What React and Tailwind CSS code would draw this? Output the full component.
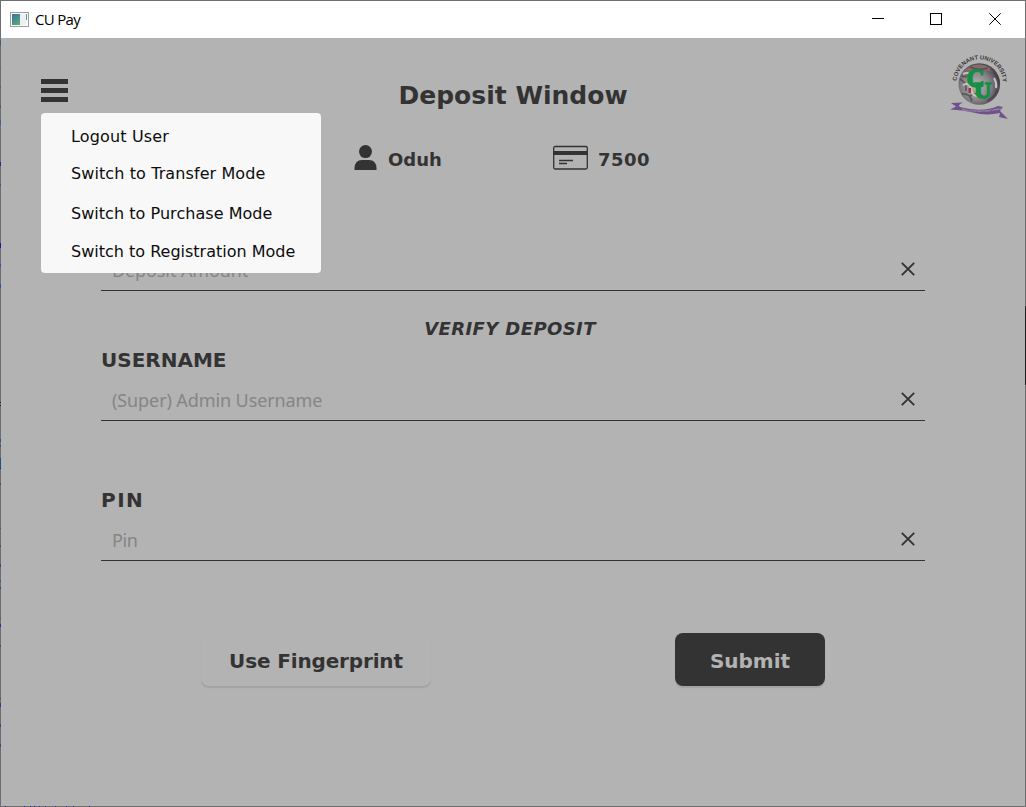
import React from "react";

const verdana = "font-['DejaVu_Sans',sans-serif]";

function TitleBar() {
  return (
    <div className="flex h-[37px] items-center bg-white text-black">
      <svg width="20" height="17" viewBox="0 0 20 17" className="mb-px ml-[9px] shrink-0">
        <defs>
          <linearGradient id="pane" x1="0" y1="0" x2=".6" y2="1">
            <stop offset="0" stopColor="#3f6f9c" />
            <stop offset="1" stopColor="#4fa878" />
          </linearGradient>
        </defs>
        <rect x=".5" y="1.5" width="18" height="14" fill="#fafafa" stroke="#9a9ea3" />
        <rect x="2" y="3" width="8" height="11" fill="url(#pane)" />
        <rect x="10" y="3" width="6" height="11" fill="#eeeff1" />
        <rect x="16" y="3" width="1" height="6" fill="#4fa07d" />
      </svg>
      <span className="mb-[2px] ml-[5px] flex-1 font-['Open_Sans','Noto_Sans',sans-serif] text-[15px] leading-[20px] tracking-[-0.7px]">CU Pay</span>
      <svg width="136" height="16" viewBox="0 0 136 16" className="mb-[2px] mr-[20px] shrink-0" fill="none" stroke="#000" strokeWidth="1">
        <path d="M3 7.5h12" />
        <rect x="61.5" y="2.5" width="11" height="11" />
        <path d="M120.3 2.3 131.7 13.7M131.7 2.3 120.3 13.7" />
      </svg>
    </div>
  );
}

function ClearIcon() {
  return (
    <svg width="16" height="16" viewBox="0 0 16 16" className="mb-[2px] mr-[9px] shrink-0" stroke="#333" strokeWidth="1.9" fill="none">
      <path d="M1.8 1.8 14.2 14.2M14.2 1.8 1.8 14.2" />
    </svg>
  );
}

function Field({ placeholder, spacing }) {
  return (
    <div className="flex h-[42px] items-center justify-between border-b border-[#333] pl-[11px]">
      <span className={"font-['Noto_Sans','Open_Sans',sans-serif] text-[18px] leading-[24px] text-[#858585] " + spacing}>{placeholder}</span>
      <ClearIcon />
    </div>
  );
}

function Logo() {
  return (
    <svg width="62" height="70" viewBox="0 0 62 70" className="shrink-0">
      <defs>
        <path id="arc" d="M8.6 29 A22.8 22.8 0 1 1 54.8 32" />
        <path id="scroll" d="M14 58 Q30 62 53 57.500" />
        <radialGradient id="globe" cx=".42" cy=".55" r=".58">
          <stop offset="0" stopColor="#b8b7b8" />
          <stop offset=".6" stopColor="#858286" />
          <stop offset="1" stopColor="#453e46" />
        </radialGradient>
      </defs>
      <circle cx="31.3" cy="32" r="20.800" fill="url(#globe)" />
      <path d="M15 20Q22 12 32 12.500q10 .5 15 8.500-8-4-14-1-9-4-18 0z" fill="#856b6c" />
      <path d="M22 15q8 4 18 1M12 27q7 4 6 12M14 42q8-1 10 7M42 17q8 5 9 13M39 49q8-4 10-11M22 44q8-6 15 3M14 24q5 2 8-2" stroke="#453e46" strokeWidth="1.8" fill="none" opacity=".65" />
      <path d="M15 33q7-3 8 4t6 7M15 22q6-3 8 2M46 26q3 5 2 10" stroke="#c4c3c4" strokeWidth="2" fill="none" />
      <path d="M20.500 36h2.500v5h-2.500z" fill="#983636" />
      <path d="M3 51 15 50.500Q9 53 12 55q22 6 38-1l5 1-3 4 8 8-9-2 1-4Q38 64 25 60.500L14 58.500 2 57.500l6-3z" fill="#6f5289" />
      <text fontFamily="Liberation Sans" fontSize="5.9" fontWeight="700" fill="#3a363a">
        <textPath href="#arc">COVENANT UNIVERSITY</textPath>
      </text>
      <text fontFamily="Liberation Sans" fontSize="2.7" fill="#c6bdcc">
        <textPath href="#scroll">Raising New Generation Leaders</textPath>
      </text>
      <g fontFamily="Liberation Serif" fontWeight="700" fill="#148f44" stroke="#148f44" strokeWidth="1.500">
        <text x="18.500" y="34.500" fontSize="25">C</text>
        <text x="26" y="45.500" fontSize="24">U</text>
      </g>
    </svg>
  );
}

const menuItems = [
  ["Logout User", "h-[37px] tracking-[0.15px]"],
  ["Switch to Transfer Mode", "h-[40px] tracking-[0.1px]"],
  ["Switch to Purchase Mode", "h-[38px] tracking-[0.04px]"],
  ["Switch to Registration Mode", "h-[24px] tracking-[0px]"],
];

function Menu() {
  return (
    <div className={"absolute left-0 top-[34px] z-10 h-[160px] w-[280px] rounded-[4px] bg-[#f8f8f8] pl-[30px] pt-[12px] text-[16px] leading-[24px] text-[#0d0d0d] " + verdana}>
      {menuItems.map(([label, cls]) => (
        <div key={label} className={"whitespace-nowrap " + cls}>{label}</div>
      ))}
    </div>
  );
}

const specks = [
  [40, 6, "#3a5f80"], [68, 1, "#2c6aa8"], [86, 2, "#2c6aa8"], [105, 3, "#3a5f80"], [120, 5, "#3a5fa0"],
  [162, 4, "#1d2c9a"], [184, 2, "#2c5aa8"], [243, 5, "#1a1a9a"], [264, 3, "#2c5aa8"], [284, 4, "#2f5590"],
  [402, 1, "#222222"], [405, 1, "#222222"], [439, 3, "#2f5580"], [445, 2, "#2f5580"], [458, 10, "#23508c"],
  [468, 1, "#1a1a9a"], [483, 2, "#2c5a90"], [528, 1, "#2c5a90"], [545, 2, "#2c5a90"], [564, 3, "#23508c"],
  [580, 2, "#3a5f80"], [587, 2, "#23508c"], [618, 1, "#2c5a90"], [624, 3, "#2c2c9a"], [645, 2, "#2c5a90"],
  [698, 1, "#2c5a90"], [703, 4, "#2c3c8a"], [724, 3, "#23508c"], [744, 3, "#23508c"],
];
const bottomSpecks = [5, 24, 30, 34, 39, 45, 55, 66, 73, 89];

export default function App() {
  return (
    <div className="relative h-[807px] w-[1026px] border border-[#6e6e6e] bg-[#b3b3b3] text-[#333]">
      <TitleBar />

      <div className="grid h-[84px] grid-cols-[1fr_auto_1fr] items-start">
        <div className="relative ml-10 mt-[41px] h-[23px] w-[27px]">
          <div className="flex flex-col gap-1">
            <div className="h-[5px] bg-[#333]" />
            <div className="h-[5px] bg-[#333]" />
            <div className="h-[5px] bg-[#333]" />
          </div>
          <Menu />
        </div>
        <h1 className={"mt-[43px] text-[25px] font-bold leading-[30px] " + verdana}>Deposit Window</h1>
        <div className="flex justify-end pr-[15px] pt-[14px]"><Logo /></div>
      </div>

      <div className={"flex h-[127px] items-start pl-[353px] pt-[23px] text-[18px] font-bold leading-[24px] " + verdana}>
        <div className="flex w-[199px]">
          <svg width="23" height="26" viewBox="0 0 23 26" fill="#333" className="shrink-0">
            <circle cx="11.500" cy="6.600" r="6.500" />
            <path d="M.5 25V23Q1 15 8 15h7q7 0 7.500 8v2z" />
          </svg>
          <span className="ml-[11px] mt-[3px]">Oduh</span>
        </div>
        <svg width="35" height="26" viewBox="0 0 35 26" className="shrink-0" fill="none" stroke="#333">
          <rect x=".7" y="1.500" width="33.600" height="22.500" rx="1.500" strokeWidth="1.300" />
          <path d="M0 8h35" strokeWidth="4" />
          <path d="M6 15.500h14M6 18.500h8" strokeWidth="1.400" />
        </svg>
        <span className="ml-[10px] mt-[3px] tracking-[0.5px]">7500</span>
      </div>

      <div className={"px-[100px] " + verdana}>
        <Field placeholder="Deposit Amount" spacing="tracking-[-0.1px]" />
        <h2 className="mr-[6px] mt-[26px] text-center text-[18px] font-bold italic leading-[24px] tracking-[0.4px]">VERIFY DEPOSIT</h2>
        <div className="mt-[5px] h-[33px] text-[20px] font-bold leading-[28px]">USERNAME</div>
        <Field placeholder="(Super) Admin Username" spacing="tracking-[-0.1px]" />
        <div className="mt-[65px] h-[33px] text-[20px] font-bold leading-[28px] tracking-[1.5px]">PIN</div>
        <Field placeholder="Pin" spacing="tracking-[-0.4px]" />
        <div className="mt-[72px] flex justify-between px-[100px] text-[20px] font-bold">
          <button className="h-[53px] w-[230px] rounded-[8px] bg-[#b3b3b3] pt-[3px] text-center tracking-[-0.15px] shadow-[0_2px_1px_0_#a2a2a2]">Use Fingerprint</button>
          <button className="h-[53px] w-[150px] rounded-[8px] bg-[#333] pt-[3px] text-center text-[#b3b3b3] shadow-[0_2px_1px_0_#a2a2a2]">Submit</button>
        </div>
      </div>

      {specks.map(([y, h, c]) => (
        <div key={y} className="absolute -left-px w-px" style={{ top: y - 1, height: h, background: c }} />
      ))}
      {bottomSpecks.map((x) => (
        <div key={x} className="absolute -bottom-px h-px w-px bg-[#25258a]" style={{ left: x - 1 }} />
      ))}
      <div className="absolute -right-px top-[305px] h-[79px] w-px bg-[#202020]" />
    </div>
  );
}
